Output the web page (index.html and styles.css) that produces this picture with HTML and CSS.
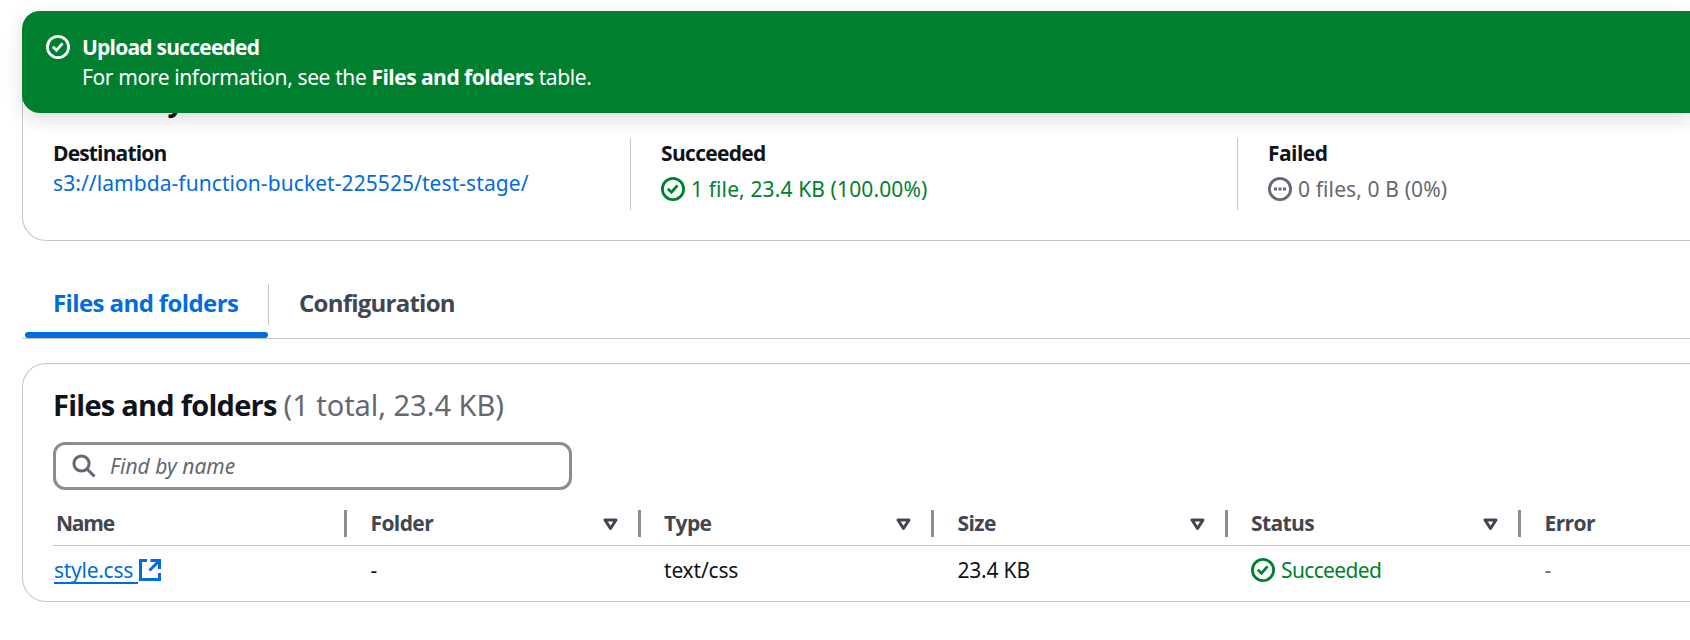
FILE: index.html
```
<!DOCTYPE html>
<html lang="en">
<head>
<meta charset="utf-8">
<title>Upload: status</title>
<link rel="stylesheet" href="styles.css">
</head>
<body>
<svg class="defs" width="0" height="0">
  <symbol id="check" viewBox="0 0 24 24"><circle cx="12" cy="12" r="10.6" fill="none" stroke="currentColor" stroke-width="2.8"/><path d="M6.8 11.8l3.7 3.4 6-6.8" fill="none" stroke="currentColor" stroke-width="2.8"/></symbol>
  <symbol id="pending" viewBox="0 0 24 24"><circle cx="12" cy="12" r="10.6" fill="none" stroke="currentColor" stroke-width="2.8"/><path d="M6 10.5h3v3H6zM10.5 10.5h3v3h-3zM15 10.5h3v3h-3z" fill="currentColor"/></symbol>
  <symbol id="filter" viewBox="0 0 15 13"><path d="M2 2h11L7.5 10.5z" fill="none" stroke="currentColor" stroke-width="3" stroke-linejoin="round"/></symbol>
</svg>
<div class="flash">
  <svg class="icon"><use href="#check"/></svg>
  <div>
    <div class="bold title">Upload succeeded</div>
    <div class="line">For more information, see the <b>Files and folders</b> table.</div>
  </div>
</div>
<main class="page">
  <section class="card summary">
    <h2 class="heading">Summary</h2>
    <div class="columns">
      <div class="column first"><div class="bold destination">Destination</div><a class="link">s3://lambda-function-bucket-225525/test-stage/</a></div>
      <div class="column"><div class="bold">Succeeded</div><div class="status ok"><svg class="icon"><use href="#check"/></svg><span>1 file, 23.4 KB (100.00%)</span></div></div>
      <div class="column"><div class="bold failed">Failed</div><div class="status idle"><svg class="icon"><use href="#pending"/></svg><span>0 files, 0 B (0%)</span></div></div>
    </div>
  </section>
  <nav class="tabs">
    <div class="tab active">Files and folders</div>
    <div class="tab">Configuration</div>
  </nav>
  <section class="card files">
    <h2 class="heading">Files and folders <span class="counter">(1 total, 23.4 KB)</span></h2>
    <div class="search">
      <svg class="glass" viewBox="0 0 24 24"><circle cx="9.5" cy="9.5" r="7.6"/><path d="M15 15l7.5 7.5"/></svg>
      <span class="placeholder">Find by name</span>
    </div>
    <div class="row head">
      <div class="cell name"><span>Name</span></div>
      <div class="cell"><span>Folder</span><svg class="filter"><use href="#filter"/></svg></div>
      <div class="cell"><span>Type</span><svg class="filter"><use href="#filter"/></svg></div>
      <div class="cell"><span>Size</span><svg class="filter"><use href="#filter"/></svg></div>
      <div class="cell"><span>Status</span><svg class="filter"><use href="#filter"/></svg></div>
      <div class="cell"><span>Error</span></div>
    </div>
    <div class="row body">
      <div class="cell name"><a class="file-link">style.css</a><svg class="external" viewBox="0 0 22 22"><path d="M8 1.5H1.5v19h19V14M11.5 1.5h9V10M20 2L10.5 11.5"/></svg></div>
      <div class="cell">-</div>
      <div class="cell">text/css</div>
      <div class="cell">23.4 KB</div>
      <div class="cell ok"><svg class="icon"><use href="#check"/></svg><span>Succeeded</span></div>
      <div class="cell idle">-</div>
    </div>
  </section>
</main>
</body>
</html>
```
FILE: styles.css
```
* { box-sizing: border-box; }
body {
  margin: 0;
  height: 640px;
  overflow: hidden;
  background: #fff;
  color: #0f141a;
  font: 21px/30px "Noto Sans", "Open Sans", sans-serif;
  white-space: nowrap;
}
.defs { position: absolute; }
.icon { width: 24px; height: 24px; flex: none; display: block; }
.bold, .line b { font-family: "Open Sans", "Noto Sans", sans-serif; font-weight: 700; letter-spacing: -0.68px; }
.flash {
  position: absolute;
  z-index: 2;
  left: 22px;
  top: 11px;
  right: 0;
  height: 102px;
  padding: 21px 24px;
  display: flex;
  gap: 12px;
  border-radius: 18px 0 0 18px;
  background: #00802f;
  color: #fff;
  box-shadow: 0 6px 18px 1px rgba(0, 7, 22, 0.12);
}
.flash .icon { margin-top: 3px; }
.title { letter-spacing: -0.78px; }
.line { letter-spacing: -0.38px; }
.line b { letter-spacing: -0.53px; }
.page { padding: 60px 0 0 22px; }
.card { border: 1px solid #c6c6cd; border-right: 0; border-radius: 24px 0 0 24px; }
.summary { height: 181px; padding: 22px 0 0 30px; border-top: 0; border-top-left-radius: 0; }
.heading {
  margin: 0;
  font: 700 29px/36px "Open Sans", "Noto Sans", sans-serif;
  letter-spacing: -0.74px;
}
.summary .heading { letter-spacing: -1.35px; }
.columns { display: grid; grid-template-columns: 577px 607px 1fr; margin-top: 20px; }
.column { height: 72px; border-left: 1px solid #c6c6cd; padding-left: 30px; }
.column.first { border-left: 0; padding-left: 0; }
.destination { letter-spacing: -0.85px; }
.failed { letter-spacing: -0.55px; }
.link { color: #006ce0; display: block; letter-spacing: 0.07px; }
.status { display: flex; align-items: center; gap: 6px; margin-top: 6px; }
.status span { letter-spacing: 0.12px; }
.ok { color: #00802f; }
.idle { color: #656871; }
.tabs { display: flex; height: 98px; padding: 43px 0 0 3px; border-bottom: 1px solid #c6c6cd; }
.tab {
  position: relative;
  height: 54px;
  padding: 2px 30px 0;
  font: 700 24px/33px "Open Sans", "Noto Sans", sans-serif;
  letter-spacing: -0.76px;
  color: #424650;
}
.tab.active { width: 244px; padding-left: 28px; letter-spacing: -0.6px; color: #006ce0; }
.tab.active::before { content: ""; position: absolute; right: 0; top: 0; width: 1px; height: 41px; background: #c6c6cd; }
.tab.active::after { content: ""; position: absolute; left: 0; bottom: 0; width: 243px; height: 6px; border-radius: 3px; background: #006ce0; }
.files { height: 239px; margin-top: 24px; padding: 23px 0 0 30px; }
.counter { font-family: "Noto Sans", sans-serif; font-weight: 400; letter-spacing: -0.03px; color: #656871; }
.search {
  display: flex;
  align-items: center;
  width: 519px;
  height: 48px;
  margin-top: 19px;
  padding-left: 16px;
  border: 3px solid #8c8c94;
  border-radius: 12px;
}
.glass { width: 24px; height: 24px; fill: none; stroke: #656871; stroke-width: 3; }
.placeholder { margin-left: 14px; font-style: italic; color: #656871; }
.row { display: grid; grid-template-columns: 317.5px repeat(4, 293.5px) 1fr; }
.cell { display: flex; align-items: center; }
.head { height: 56px; padding-top: 20px; border-bottom: 1px solid #c6c6cd; color: #424650; font-family: "Open Sans", "Noto Sans", sans-serif; font-weight: 700; letter-spacing: -0.6px; align-items: start; }
.head .cell { height: 27px; border-right: 3px solid #8c8c94; margin-right: 23.5px; }
.head .cell:last-child { border: 0; }
.head .cell span { margin-top: -2px; }
.head .name { padding-left: 3px; letter-spacing: -1.2px; }
.filter { width: 15px; height: 13px; margin: 2px 20px 0 auto; }
.body { height: 48px; letter-spacing: -0.2px; }
.body .name { padding-left: 1px; }
.body .ok { gap: 6px; letter-spacing: -0.65px; }
.file-link { width: 84px; height: 28px; line-height: 28px; border-bottom: 2px solid #006ce0; color: #006ce0; letter-spacing: -0.27px; }
.external { width: 22px; height: 22px; margin-left: 1px; fill: none; stroke: #006ce0; stroke-width: 3; }
```
